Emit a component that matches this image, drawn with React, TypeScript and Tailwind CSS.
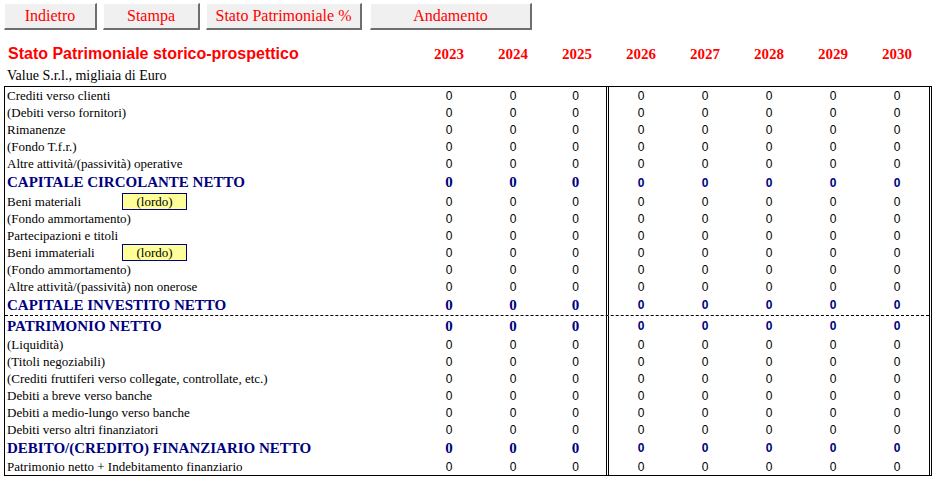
import React from 'react';

type Row = {
  label: string;
  bold?: boolean;
  tall?: boolean;
  lordo?: boolean;
  dashed?: boolean;
};

const years = [2023, 2024, 2025, 2026, 2027, 2028, 2029, 2030];

const rows: Row[] = [
  { label: 'Crediti verso clienti' },
  { label: '(Debiti verso fornitori)' },
  { label: 'Rimanenze' },
  { label: '(Fondo T.f.r.)' },
  { label: 'Altre attività/(passività) operative' },
  { label: 'CAPITALE CIRCOLANTE NETTO', bold: true, tall: true },
  { label: 'Beni materiali', lordo: true },
  { label: '(Fondo ammortamento)' },
  { label: 'Partecipazioni e titoli' },
  { label: 'Beni immateriali', lordo: true },
  { label: '(Fondo ammortamento)' },
  { label: 'Altre attività/(passività) non onerose' },
  { label: 'CAPITALE INVESTITO NETTO', bold: true, tall: true, dashed: true },
  { label: 'PATRIMONIO NETTO', bold: true },
  { label: '(Liquidità)' },
  { label: '(Titoli negoziabili)' },
  { label: '(Crediti fruttiferi verso collegate, controllate, etc.)' },
  { label: 'Debiti a breve verso banche' },
  { label: 'Debiti a medio-lungo verso banche' },
  { label: 'Debiti verso altri finanziatori' },
  { label: 'DEBITO/(CREDITO) FINANZIARIO NETTO', bold: true },
  { label: 'Patrimonio netto + Indebitamento finanziario' },
];

const serif = "font-['Liberation_Serif','Times_New_Roman',serif]";
const sans = "font-['Liberation_Sans',Arial,sans-serif]";

const ToolButton: React.FC<{ label: string; width: string; className?: string }> = ({ label, width, className = '' }) => (
  <button
    className={`${width} h-[27px] bg-[#f0f0f0] border-t border-l border-t-white border-l-white border-r-2 border-b-2 border-r-[#6e6e6e] border-b-[#6e6e6e] text-[16px] text-[#ff0000] ${serif} ${className}`}
  >
    {label}
  </button>
);

const TableRow: React.FC<{ row: Row }> = ({ row }) => {
  const height = row.bold ? (row.tall ? 'h-[21px]' : 'h-[20px]') : 'h-[17px]';
  return (
    <div className={`flex ${height} ${row.dashed ? 'border-b border-dashed border-black' : ''}`}>
      {/* etichetta */}
      <div
        className={`w-[412px] flex items-center pl-[2px] whitespace-nowrap ${serif} ${
          row.bold ? 'text-[15px] font-bold text-[#000080]' : 'text-[13px] text-black'
        }`}
      >
        {row.lordo ? (
          <>
            <span className="w-[115px]">{row.label}</span>
            <span className="w-[65px] h-[17px] flex items-center justify-center bg-[#ffff99] border border-[#000080] text-black">
              (lordo)
            </span>
          </>
        ) : (
          row.label
        )}
      </div>
      {years.map((y, i) => {
        const historic = i < 3;
        let cls = `${sans} text-[12px] text-black`;
        if (row.bold) {
          cls = historic
            ? `${serif} text-[15px] font-bold text-[#000080]`
            : `${sans} text-[12px] font-bold text-[#000080]`;
        }
        return (
          <div
            key={y}
            className={`w-16 flex items-center justify-center ${cls} ${
              i === 2 ? 'border-r-[3px] border-double border-black' : ''
            }`}
          >
            0
          </div>
        );
      })}
    </div>
  );
};

export default function App() {
  return (
    <div className="w-[936px] h-[482px] bg-white pt-[3px] overflow-hidden">
      {/* Pulsanti */}
      <div className="flex ml-1 gap-[6px]">
        <ToolButton label="Indietro" width="w-[93px]" />
        <ToolButton label="Stampa" width="w-[97px]" />
        <ToolButton label="Stato Patrimoniale %" width="w-[156px]" />
        <ToolButton label="Andamento" width="w-[162px]" className="ml-[2px]" />
      </div>

      {/* Titolo e anni */}
      <div className="flex ml-1 mt-[13px] h-[22px] items-center">
        <div className={`w-[413px] pl-[4px] text-[16px] font-bold text-[#ff0000] ${sans}`}>
          Stato Patrimoniale storico-prospettico
        </div>
        {years.map((y) => (
          <div key={y} className={`w-16 text-center text-[15px] font-bold text-[#ff0000] ${serif}`}>
            {y}
          </div>
        ))}
      </div>

      <div className={`ml-[7px] h-[21px] flex items-center text-[14px] text-black ${serif}`}>
        Value S.r.l., migliaia di Euro
      </div>

      {/* Tabella */}
      <div className="ml-1 w-[928px] border-t border-l border-b border-black border-r-[3px] border-r-black border-double">
        {rows.map((r, i) => (
          <TableRow key={i} row={r} />
        ))}
      </div>
    </div>
  );
}
